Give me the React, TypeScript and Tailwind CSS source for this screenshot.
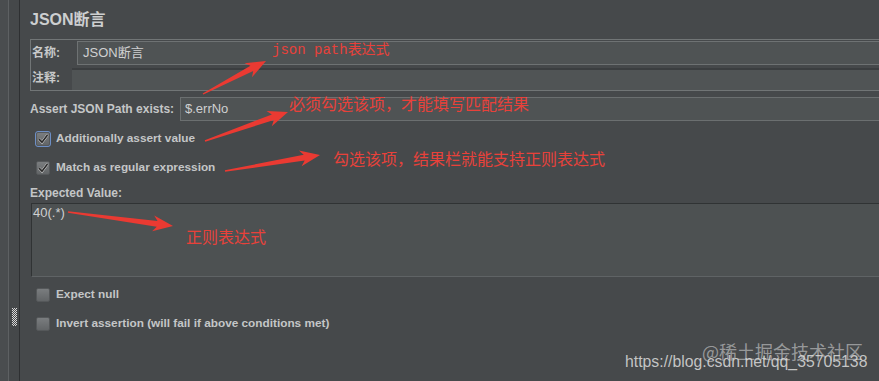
import React from "react";

type Pt = [number, number];

// hand-drawn style arrow: thin tail, wide head
const arrowPoints = (t: Pt, p: Pt, head = 20, half = 8, neck = 3) => {
  const dx = p[0] - t[0];
  const dy = p[1] - t[1];
  const len = Math.hypot(dx, dy);
  const ux = dx / len;
  const uy = dy / len;
  const nx = -uy;
  const ny = ux;
  const bx = p[0] - ux * head;
  const by = p[1] - uy * head;
  const pts: Pt[] = [
    [t[0] + nx * 0.7, t[1] + ny * 0.7],
    [bx + nx * neck + ux * 4, by + ny * neck + uy * 4],
    [bx + nx * half, by + ny * half],
    p,
    [bx - nx * half, by - ny * half],
    [bx - nx * neck + ux * 4, by - ny * neck + uy * 4],
    [t[0] - nx * 0.7, t[1] - ny * 0.7],
  ];
  return pts.map((q) => q.join(",")).join(" ");
};

const arrows: [Pt, Pt][] = [
  [[203, 94], [266, 61]],
  [[205, 141], [288, 112]],
  [[225, 171], [320, 155]],
  [[68, 212], [173, 226]],
];

const Check = ({ checked, focus }: { checked?: boolean; focus?: boolean }) => (
  <div
    className={
      "w-[16px] h-[16px] flex items-center justify-center rounded-[3px] " +
      (focus ? "border border-[#6d8fc6] bg-[#5a6f92]" : "")
    }
  >
    <div className="w-[14px] h-[14px] rounded-[2px] bg-gradient-to-b from-[#7a7d7f] to-[#626567] border border-[#55585a] flex items-center justify-center">
      {checked && (
        <svg width="12" height="12" viewBox="0 0 12 12">
          <path d="M2 6.2 L5 9.2 L10.5 2" fill="none" stroke="#dcdcdc" strokeWidth="2.6" />
          <path d="M2 6.2 L5 9.2 L10.5 2" fill="none" stroke="#2b2b2b" strokeWidth="1.7" />
        </svg>
      )}
    </div>
  </div>
);

const Row = ({ children }: { children: React.ReactNode }) => (
  <div className="mt-[7px] h-[22px] flex items-center pl-[5px] gap-[5px] text-[11.8px] font-bold text-[#c4c6c7]">
    {children}
  </div>
);

export default function App() {
  const ui = { fontFamily: '"Liberation Sans", "Noto Sans CJK SC", sans-serif' };
  const cjk = { fontFamily: '"Noto Sans CJK SC", sans-serif' };

  return (
    <div className="relative w-[879px] h-[381px] overflow-hidden flex bg-[#46494b]" style={ui}>
      {/* left split strips */}
      <div className="w-[9px] shrink-0 bg-[#4a4d4f] border-r border-[#5e6163]" />
      <div className="w-[10px] shrink-0 bg-[#45484a] flex flex-col pt-[308px] pl-[3px]">
        <svg width="5" height="18" viewBox="0 0 5 18">
          {Array.from({ length: 18 }).map((_, r) =>
            Array.from({ length: 5 }).map((__, c) =>
              (r + c) % 2 === 0 ? (
                <rect key={r + "-" + c} x={c} y={r} width="1" height="1" fill="#d8d8d8" />
              ) : null
            )
          )}
        </svg>
      </div>
      <div className="w-px shrink-0 bg-[#2e3032]" />

      {/* main panel */}
      <div className="w-[900px] shrink-0 pl-[10px] pt-[10px] flex flex-col">
        <div className="h-[20px] leading-[20px] text-[16px] font-bold text-[#cdcfd0]">JSON断言</div>

        <div className="mt-[9px] border border-[#717576] flex flex-col">
          <div className="h-[26px] flex items-center">
            <div className="w-[46px] pl-[1px] text-[12px] font-bold text-[#c8c9ca]">名称:</div>
            <div className="flex-1 h-[24px] border border-[#6e7273] bg-[#4f5354] pl-[5px] flex items-center text-[13px] text-[#cfd0d1]">
              JSON断言
            </div>
          </div>
          <div className="h-[24px] flex items-center">
            <div className="w-[41px] pl-[1px] text-[12px] font-bold text-[#c8c9ca]">注释:</div>
            <div className="flex-1 h-[22px] mt-[1px] border-t-2 border-[#3b3e40] bg-[#505455]" />
          </div>
        </div>

        <div className="mt-[6px] h-[24px] flex items-center">
          <div className="w-[150px] text-[12px] font-bold text-[#c4c6c7]">Assert JSON Path exists:</div>
          <div className="flex-1 h-[24px] border border-[#6b6f70] bg-[#4f5354] pl-[4px] flex items-center text-[13px] text-[#cfd0d1]">
            $.errNo
          </div>
        </div>

        <Row>
          <Check checked focus />
          <span>Additionally assert value</span>
        </Row>
        <Row>
          <Check checked />
          <span>Match as regular expression</span>
        </Row>

        <div className="mt-[6px] h-[16px] leading-[16px] text-[12px] font-bold text-[#c4c6c7]">Expected Value:</div>
        <div className="mt-[2px] ml-[1px] h-[74px] border-t border-l border-[#303334] border-b border-b-[#5f6365] bg-[#4d5152] pl-[1px] leading-[18px] text-[13px] text-[#cfd0d1]">
          40(.*)
        </div>

        <Row>
          <Check />
          <span>Expect null</span>
        </Row>
        <Row>
          <Check />
          <span>Invert assertion (will fail if above conditions met)</span>
        </Row>
      </div>

      {/* annotations drawn on top of the screenshot */}
      <svg className="absolute left-0 top-0 pointer-events-none" width="879" height="381">
        {arrows.map(([t, p], i) => (
          <polygon key={i} points={arrowPoints(t, p)} fill="#ea3a32" />
        ))}
      </svg>
      <div className="absolute left-[272px] top-[38px] leading-[20px] text-[14px] text-[#e8413a]">
        <span style={{ fontFamily: '"Liberation Mono", monospace' }}>json path</span>
        <span style={cjk}>表达式</span>
      </div>
      <div className="absolute left-[289px] top-[93px] leading-[20px] text-[16px] text-[#e8413a]" style={cjk}>
        必须勾选该项，才能填写匹配结果
      </div>
      <div className="absolute left-[333px] top-[148px] leading-[20px] text-[16px] text-[#e8413a]" style={cjk}>
        勾选该项，结果栏就能支持正则表达式
      </div>
      <div className="absolute left-[186px] top-[226px] leading-[20px] text-[16px] text-[#e8413a]" style={cjk}>
        正则表达式
      </div>

      {/* watermarks */}
      <div className="absolute left-[702px] top-[340px] leading-[22px] text-[18px] text-white/45" style={cjk}>
        @稀土掘金技术社区
      </div>
      <div className="absolute left-[625px] top-[352px] leading-[20px] text-[15.8px] text-[#dcdcdc]/85">
        https://blog.csdn.net/qq_35705138
      </div>
    </div>
  );
}
